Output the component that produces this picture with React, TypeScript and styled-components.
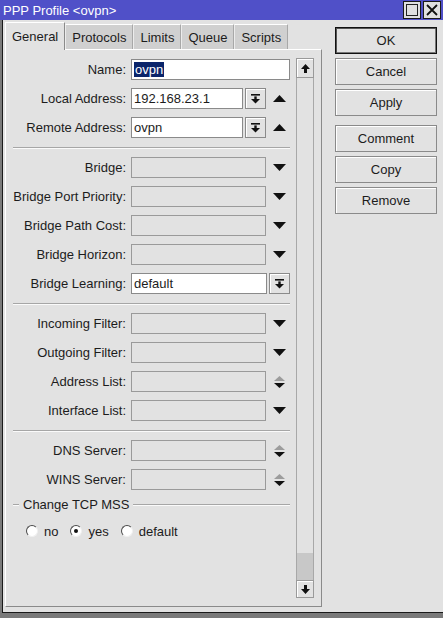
import { Fragment } from "react";
import styled, { createGlobalStyle } from "styled-components";

const GlobalStyle = createGlobalStyle`
  html, body {
    margin: 0;
    padding: 0;
    background: #7a7a7a;
  }
  body {
    font-family: "Liberation Sans", Arial, sans-serif;
    font-size: 13px;
    color: #1c1c1c;
  }
`;

const Window = styled.div`
  width: 443px;
  height: 613px;
  display: flex;
  flex-direction: column;
  overflow: hidden;
`;

const TitleBar = styled.div`
  height: 20px;
  flex: none;
  background: #5050c8;
  display: flex;
  align-items: center;
  justify-content: space-between;
  padding: 0 2px 0 3px;
`;

const Title = styled.div`
  color: #fff;
  font-size: 13px;
`;

const TitleButtons = styled.div`
  display: flex;
  gap: 2px;
`;

const TitleButton = styled.div`
  width: 16px;
  height: 16px;
  background: #e0e0e0;
  border: 1px solid #1a1a1a;
  display: flex;
  align-items: center;
  justify-content: center;
`;

const Frame = styled.div`
  flex: 1;
  margin-left: 2px;
  border-left: 1px solid #1a1a1a;
  border-bottom: 1px solid #1a1a1a;
  background: #e2e2e2;
  padding: 2px 0 5px 2px;
  display: flex;
  min-height: 0;
`;

const Main = styled.div`
  width: 317px;
  display: flex;
  flex-direction: column;
`;

const TabRow = styled.div`
  height: 27px;
  display: flex;
  align-items: flex-end;
`;

const Tab = styled.div<{ $active?: boolean }>`
  box-sizing: border-box;
  padding: 0 6px;
  display: flex;
  align-items: center;
  justify-content: center;
  background: ${(p) => (p.$active ? "#e2e2e2" : "#d0d0d0")};
  border-top: 1px solid #fff;
  border-left: 1px solid ${(p) => (p.$active ? "#fff" : "#ececec")};
  border-right: 1px solid ${(p) => (p.$active ? "#8a8a8a" : "#a8a8a8")};
  height: ${(p) => (p.$active ? "28px" : "25px")};
  margin-bottom: ${(p) => (p.$active ? "-1px" : "0")};
  position: relative;
  z-index: ${(p) => (p.$active ? 1 : 0)};
`;

const Panel = styled.div`
  flex: 1;
  box-sizing: border-box;
  border-top: 1px solid #fff;
  border-left: 1px solid #fff;
  border-right: 1px solid #8a8a8a;
  border-bottom: 1px solid #8a8a8a;
  padding: 8px 7px 8px 7px;
  display: flex;
  gap: 6px;
`;

const Form = styled.div`
  flex: 1;
  display: flex;
  flex-direction: column;
  gap: 8px;
  padding-top: 1px;
`;

const Row = styled.div`
  display: grid;
  grid-template-columns: 113px 1fr;
  column-gap: 5px;
  height: 21px;
  align-items: center;
`;

const Label = styled.div`
  text-align: right;
  white-space: nowrap;
`;

const FieldLine = styled.div`
  display: flex;
  gap: 2px;
  height: 21px;
`;

const Input = styled.div<{ $empty?: boolean }>`
  flex: 1;
  box-sizing: border-box;
  height: 21px;
  border: 1px solid ${(p) => (p.$empty ? "#9a9a9a" : "#8a8a8a")};
  background: ${(p) => (p.$empty ? "#e2e2e2" : "#fff")};
  padding-left: 2px;
  display: flex;
  align-items: center;
  white-space: nowrap;
  overflow: hidden;
`;

const Selected = styled.span`
  background: #0a246a;
  color: #fff;
  padding: 0 1px;
  line-height: 15px;
`;

const DropButton = styled.div`
  width: 21px;
  box-sizing: border-box;
  border: 1px solid #8a8a8a;
  box-shadow: inset 1px 1px 0 #fff;
  background: #e2e2e2;
  display: flex;
  align-items: center;
  justify-content: center;
`;

const IconSlot = styled.div`
  width: 22px;
  display: flex;
  align-items: center;
  justify-content: center;
`;

const Separator = styled.div`
  height: 3px;
  display: flex;
  flex-direction: column;
  justify-content: center;
  &::before {
    content: "";
    border-top: 1px solid #a6a6a6;
    border-bottom: 1px solid #fafafa;
  }
`;

const GroupHeader = styled.div`
  display: flex;
  align-items: center;
  height: 13px;
  gap: 4px;
  &::before,
  &::after {
    content: "";
    border-top: 1px solid #a6a6a6;
    border-bottom: 1px solid #fafafa;
  }
  &::before {
    width: 6px;
  }
  &::after {
    flex: 1;
  }
`;

const RadioRow = styled.div`
  display: flex;
  align-items: center;
  gap: 12px;
  padding-left: 13px;
  margin-top: 5px;
  height: 14px;
`;

const RadioItem = styled.label`
  display: flex;
  align-items: center;
  gap: 6px;
`;

const RadioDot = styled.span<{ $checked?: boolean }>`
  width: 12px;
  height: 12px;
  box-sizing: border-box;
  border-radius: 50%;
  background: #fff;
  border: 1px solid;
  border-color: #4a4a4a #f0f0f0 #f0f0f0 #4a4a4a;
  display: flex;
  align-items: center;
  justify-content: center;
  &::after {
    content: "";
    width: 4px;
    height: 4px;
    border-radius: 50%;
    background: ${(p) => (p.$checked ? "#111" : "transparent")};
  }
`;

const ScrollBar = styled.div`
  width: 18px;
  display: flex;
  flex-direction: column;
`;

const ScrollButton = styled.div<{ $h: number }>`
  height: ${(p) => p.$h}px;
  box-sizing: border-box;
  border: 1px solid #9a9a9a;
  box-shadow: inset 1px 1px 0 #fff;
  background: #e2e2e2;
  display: flex;
  align-items: center;
  justify-content: center;
`;

const Track = styled.div`
  flex: 1;
  border-left: 1px solid #a8a8a8;
  border-right: 1px solid #a8a8a8;
  display: flex;
  flex-direction: column;
  justify-content: flex-end;
`;

const Thumb = styled.div`
  height: 27px;
  background: #c8c8c8;
`;

const Side = styled.div`
  margin: 5px 0 0 13px;
  width: 102px;
  display: flex;
  flex-direction: column;
  gap: 4px;
`;

const ActionButton = styled.div<{ $default?: boolean; $spaced?: boolean }>`
  height: 27px;
  box-sizing: border-box;
  border: 1px solid ${(p) => (p.$default ? "#111" : "#8a8a8a")};
  box-shadow: ${(p) =>
    p.$default ? "inset 1px 1px 0 #555, inset -1px -1px 0 #777" : "inset 1px 1px 0 #fff"};
  background: #e2e2e2;
  display: flex;
  align-items: center;
  justify-content: center;
  margin-top: ${(p) => (p.$spaced ? "5px" : "0")};
`;

const DropIcon = () => (
  <svg width="9" height="10" viewBox="0 0 9 10">
    <rect x="0" y="0" width="9" height="1.6" fill="#111" />
    <rect x="3.3" y="2.4" width="2.4" height="3" fill="#111" />
    <path d="M0 5h9L4.5 9.5z" fill="#111" />
  </svg>
);

const Triangle = ({ up }: { up?: boolean }) => (
  <svg width="13" height="7" viewBox="0 0 13 7">
    <path d={up ? "M0 7h13L6.5 0z" : "M0 0h13L6.5 7z"} fill="#111" />
  </svg>
);

const UpDown = () => (
  <svg width="11" height="12" viewBox="0 0 11 12">
    <path d="M0 5h11L5.5 0z" fill="#9c9c9c" />
    <path d="M0 7h11L5.5 12z" fill="#111" />
  </svg>
);

const ScrollArrow = ({ down }: { down?: boolean }) => (
  <svg width="9" height="9" viewBox="0 0 9 9">
    <path d={down ? "M4.5 9L9 4H6V0H3v4H0z" : "M4.5 0L9 5H6v4H3V5H0z"} fill="#111" />
  </svg>
);

type Field = {
  label: string;
  value?: string;
  selected?: boolean;
  button?: boolean;
  icon?: "up" | "down" | "updown";
};

const sections: Field[][] = [
  [
    { label: "Name:", value: "ovpn", selected: true },
    { label: "Local Address:", value: "192.168.23.1", button: true, icon: "up" },
    { label: "Remote Address:", value: "ovpn", button: true, icon: "up" },
  ],
  [
    { label: "Bridge:", icon: "down" },
    { label: "Bridge Port Priority:", icon: "down" },
    { label: "Bridge Path Cost:", icon: "down" },
    { label: "Bridge Horizon:", icon: "down" },
    { label: "Bridge Learning:", value: "default", button: true },
  ],
  [
    { label: "Incoming Filter:", icon: "down" },
    { label: "Outgoing Filter:", icon: "down" },
    { label: "Address List:", icon: "updown" },
    { label: "Interface List:", icon: "down" },
  ],
  [
    { label: "DNS Server:", icon: "updown" },
    { label: "WINS Server:", icon: "updown" },
  ],
];

const FieldRow = ({ f }: { f: Field }) => (
  <Row>
    <Label>{f.label}</Label>
    <FieldLine>
      <Input $empty={f.value === undefined}>
        {f.selected ? <Selected>{f.value}</Selected> : f.value}
      </Input>
      {f.button && (
        <DropButton>
          <DropIcon />
        </DropButton>
      )}
      {f.icon && (
        <IconSlot>
          {f.icon === "updown" ? <UpDown /> : <Triangle up={f.icon === "up"} />}
        </IconSlot>
      )}
    </FieldLine>
  </Row>
);

const tabs = ["General", "Protocols", "Limits", "Queue", "Scripts"];

export default function App() {
  return (
    <>
      <GlobalStyle />
      <Window>
        <TitleBar>
          <Title>PPP Profile &lt;ovpn&gt;</Title>
          <TitleButtons>
            <TitleButton>
              <svg width="12" height="12" viewBox="0 0 12 12">
                <rect x="0.5" y="0.5" width="11" height="11" fill="none" stroke="#222" />
              </svg>
            </TitleButton>
            <TitleButton>
              <svg width="12" height="12" viewBox="0 0 12 12">
                <path d="M1 1L11 11M11 1L1 11" stroke="#111" strokeWidth="1.8" />
              </svg>
            </TitleButton>
          </TitleButtons>
        </TitleBar>
        <Frame>
          <Main>
            <TabRow>
              {tabs.map((t, i) => (
                <Tab key={t} $active={i === 0}>
                  {t}
                </Tab>
              ))}
            </TabRow>
            <Panel>
              <Form>
                {sections.map((sec, i) => (
                  <Fragment key={i}>
                    {i > 0 && <Separator />}
                    {sec.map((f) => (
                      <FieldRow key={f.label} f={f} />
                    ))}
                  </Fragment>
                ))}
                <GroupHeader>Change TCP MSS</GroupHeader>
                <RadioRow>
                  <RadioItem>
                    <RadioDot />
                    no
                  </RadioItem>
                  <RadioItem>
                    <RadioDot $checked />
                    yes
                  </RadioItem>
                  <RadioItem>
                    <RadioDot />
                    default
                  </RadioItem>
                </RadioRow>
              </Form>
              <ScrollBar>
                <ScrollButton $h={20}>
                  <ScrollArrow />
                </ScrollButton>
                <Track>
                  <Thumb />
                </Track>
                <ScrollButton $h={18}>
                  <ScrollArrow down />
                </ScrollButton>
              </ScrollBar>
            </Panel>
          </Main>
          <Side>
            <ActionButton $default>OK</ActionButton>
            <ActionButton>Cancel</ActionButton>
            <ActionButton>Apply</ActionButton>
            <ActionButton $spaced>Comment</ActionButton>
            <ActionButton>Copy</ActionButton>
            <ActionButton>Remove</ActionButton>
          </Side>
        </Frame>
      </Window>
    </>
  );
}
